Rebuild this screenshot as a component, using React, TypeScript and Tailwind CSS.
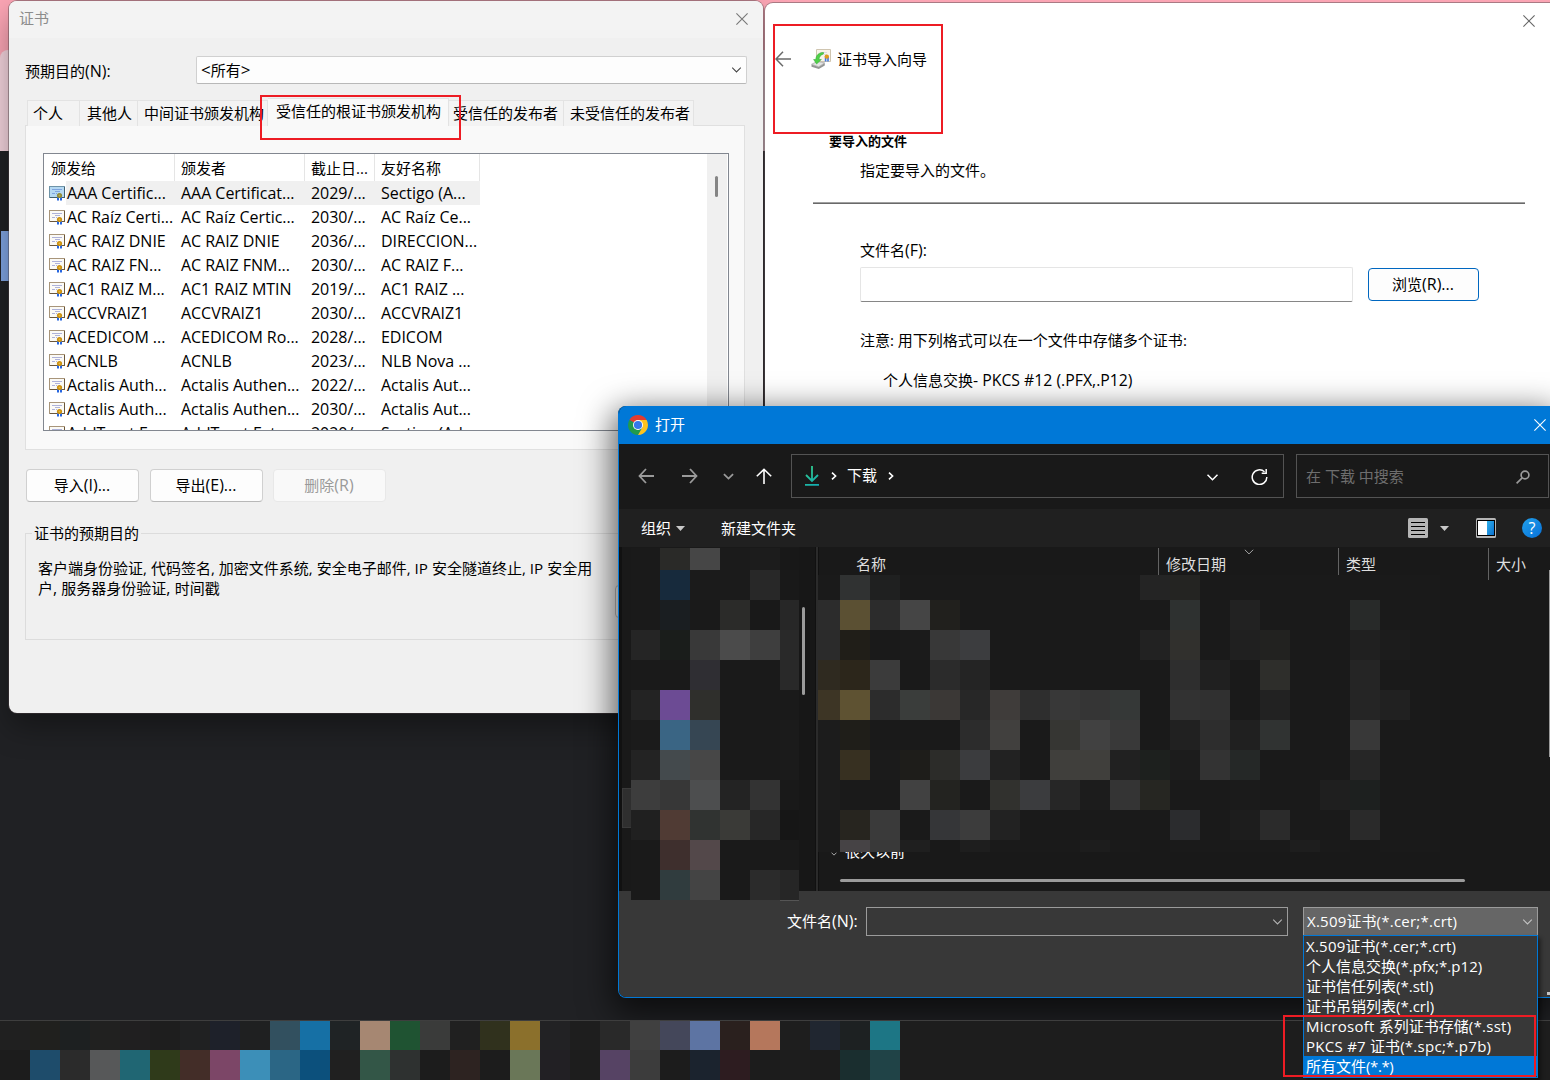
import React from "react";

const FONT = "font-['Open_Sans','Noto_Sans_CJK_SC',sans-serif]";

/* Mixed Chinese/Latin text: Latin runs are set slightly larger than the ideographs. */
function T({ children, latin = "text-[16px] leading-[0]" }: { children: string; latin?: string }) {
  return (
    <span className="whitespace-pre">
      {children.split(/([\u3000-\u9fff]+)/).map((part, i) =>
        i % 2 === 1 ? part : part && <span key={i} className={latin}>{part}</span>,
      )}
    </span>
  );
}

type MosaicProps = { cols: number[]; rows: number[]; cells: string[]; base: string };

/* Pixelated block: each cell is a hex colour, "." keeps the base colour. */
function Mosaic({ cols, rows, cells, base }: MosaicProps) {
  return (
    <div className="flex flex-col" style={{ backgroundColor: base }}>
      {cells.map((line, r) => (
        <div key={r} className="flex" style={{ height: rows[r] }}>
          {line.split(" ").map((c, i) => (
            <div
              key={i}
              className="shrink-0"
              style={{ width: cols[i], backgroundColor: c === "." ? base : "#" + c }}
            />
          ))}
        </div>
      ))}
    </div>
  );
}

const SIDE_CELLS = [
  ". 2a2a28 464646 1b1b1b 1c1c1c 181818",
  ". 172a3c 1b1b1b 1b1b1b 282828 191919",
  ". 1a1e21 . 2b2b29 191919 272727",
  "252525 1a1d1b 393939 4b4b4b 3e3e3e 292929",
  ". . 2f2e33 . . 292929",
  "232323 6c4b94 2f2f2c . . .",
  "1b1b1b 3a6584 364653 . . 1b1b1b",
  "232323 444a4d 474747 . . 1b1b1b",
  "3d3d3d 373737 4d4e4f 232323 333333 191919",
  "202020 503b34 303331 3a3a37 272727 161616",
  ". 3e2f2d 53484a . . .",
  ". 303c3e 444444 . 2b2b2b 262626",
];

const FILE_CELLS = [
  ". 303232 1f2020 . . . . . . . . 242424 242422 . . . . . . . .",
  "2c2c2c 5b5033 2c2c2c 454545 21201d . . . . . . . 2e3130 . 222222 . . . 282a29 . .",
  "2b2b2b 201e18 . 1b1b1b 383838 3c3d3f . . . . . 222222 31302d . 202020 222220 . . 202020 1c1c1c .",
  "2f2a20 2c261b 3b3b3b . 2b2b2b 242424 . . . . . . 2e2e2e 202020 . 2e2e2b . . 252525 . .",
  "3d3525 5e5232 2c2c2c 3a3d3b 3b3836 272727 3f3c3a 2e2e2e 383838 353535 353837 . 323232 303030 . 222222 . . 252525 212121 .",
  "1c1c1c 1f1e19 . . . 2c2c2c 41403e . 363633 414141 393939 . 212121 2d2d2d 202020 303332 . . 383838 . .",
  "1c1c1c 373021 1b1b1b 1e1d1a 2c2c29 3b3c3e 222222 . 403f3c 403f3c 212121 1d201e 1c1c1c 333333 252827 . . . 262626 . .",
  "1c1c1c . . 414141 232320 . 31312e 3b3c3e 262626 1c1c1c 343434 262622 . . 1b1b1b . . 1f1f1f 1d201f . .",
  "1b1b1b 27251f 3a3a3a . 353638 3c3c3c 222222 . . . . . 2b2c2e . 1d1d1d 2b2b2b . . 2a2a2a . .",
  "1b1b1b 464345 393939 1f1f1f 191919 1e1e1e . . . 1d1d1d . 191919 . . . . 1e1e1e . 191919 . .",
];

const TASK_CELLS = [
  "202020 20201e 1d2021 212120 201f20 1e1e1e 202122 1e212a 1f2021 32505f 1670a5 1f2325 a68772 1f5332 3a3b3a 202020 30311d 8b702c 222224 1e1e1e 292929 404040 44475a 5d74a3 2a201e b5775c 1e1e1e 202630 1d2122 1d7685",
  "1c1c1c 1e4c6b 2b2b2b 575859 206673 2f3a1a 432d28 7c4667 3c8fb8 2b6685 0c507c 202020 335647 2e3130 1c1c1c 2d2321 1c1c1c 6a7758 222024 1d1d1d 564364 3c3c3c 1c1c1c 1b232e 2d1c20 1c1c1c 1d1d1d 1c1c1c 1a2e2f 204347",
];

const CERTS = [
  ["AAA Certific...", "AAA Certificat...", "2029/...", "Sectigo (A..."],
  ["AC Raíz Certi...", "AC Raíz Certic...", "2030/...", "AC Raíz Ce..."],
  ["AC RAIZ DNIE", "AC RAIZ DNIE", "2036/...", "DIRECCION..."],
  ["AC RAIZ FN...", "AC RAIZ FNM...", "2030/...", "AC RAIZ F..."],
  ["AC1 RAIZ M...", "AC1 RAIZ MTIN", "2019/...", "AC1 RAIZ ..."],
  ["ACCVRAIZ1", "ACCVRAIZ1", "2030/...", "ACCVRAIZ1"],
  ["ACEDICOM ...", "ACEDICOM Ro...", "2028/...", "EDICOM"],
  ["ACNLB", "ACNLB", "2023/...", "NLB Nova ..."],
  ["Actalis Auth...", "Actalis Authen...", "2022/...", "Actalis Aut..."],
  ["Actalis Auth...", "Actalis Authen...", "2030/...", "Actalis Aut..."],
  ["AddTrust Ex...", "AddTrust Exter...", "2020/...", "Sectigo (Ad..."],
];

const WIDE = "tracking-[0.24px]";
const FILTERS: [string, string][] = [
  ["X.509证书(*.cer;*.crt)", WIDE],
  ["个人信息交换(*.pfx;*.p12)", "tracking-[0.05px]"],
  ["证书信任列表(*.stl)", "tracking-normal"],
  ["证书吊销列表(*.crl)", "tracking-normal"],
  ["Microsoft 系列证书存储(*.sst)", "tracking-[0.27px]"],
  ["PKCS #7 证书(*.spc;*.p7b)", "tracking-[0.27px]"],
  ["所有文件(*.*)", "tracking-[-0.4px]"],
];

function CloseIcon({ className }: { className: string }) {
  return (
    <svg className={"size-3 " + className} viewBox="0 0 12 12" fill="none" stroke="currentColor" strokeWidth="1.1">
      <path d="M.4.4l11.2 11.2M11.6.4L.4 11.6" />
    </svg>
  );
}

function Chevron({ className, w = 1.2 }: { className: string; w?: number }) {
  return (
    <svg className={className} viewBox="0 0 12 7" fill="none" stroke="currentColor" strokeWidth={w}>
      <path d="M1 .8l5 5 5-5" />
    </svg>
  );
}

function CertIcon({ selected }: { selected: boolean }) {
  return (
    <svg className="h-[15px] w-4 shrink-0" viewBox="0 0 16 15">
      <path d="M0 0h16v12H0z" fill={selected ? "#6f94a8" : "#a8957a"} />
      <path d="M15 1h1v11H1v-1h14z" fill={selected ? "#41606f" : "#6b5638"} />
      <path d="M1 1h14v10H1z" fill={selected ? "#b5d9f3" : "#fbfaf6"} />
      <path d="M3 3.500h10M6 5.500h5M3 7.500h3M7 7.500h1" stroke={selected ? "#7fa5e0" : "#aeb2da"} />
      <path d="M8 11h2v3.500H8zM11 11h2v3.500h-2z" fill="#2766e0" />
      <circle cx="10.500" cy="9.500" r="2.600" fill={selected ? "#8f8a36" : "#c98f10"} />
      <circle cx="10.500" cy="9.500" r="1" fill={selected ? "#b5aa55" : "#e8b93c"} />
    </svg>
  );
}

function WizardIcon() {
  return (
    <svg className="h-5 w-5" viewBox="0 0 20 20">
      <path d="M5.500.5h14v12h-14z" fill="#f8f4ea" stroke="#cfc5b0" />
      <path d="M9 3.500h7M13 5.500h3" stroke="#dcdce4" />
      <path d="M14.600 8v4.500M17 8v4.500" stroke="#3f78e0" strokeWidth="1.600" />
      <circle cx="15.800" cy="7.600" r="2.200" fill="#e09a1c" />
      <path d="M.6 15.300l5.400-2.800 7.600 1.300-5.800 4z" fill="#e4e4e4" stroke="#a5a5a5" strokeWidth=".7" />
      <path d="M.5 15.500l7.300 2.500v2L.5 17.800zM7.800 18l6-4v2.400l-6 3.600z" fill="#949694" />
      <path d="M12.500 3.500C8 3.500 5 6 4.800 10.500H2.600L5.600 15l4.800-4.500H8C8.200 8 9.500 6 12.500 5z" fill="#4fd048" stroke="#35a535" strokeWidth=".5" />
    </svg>
  );
}

function ChromeIcon() {
  return (
    <svg className="size-5" viewBox="0 0 20 20">
      <path d="M10 10L1.340 5A10 10 0 0 1 18.660 5z" fill="#e33b2e" />
      <path d="M10 10L1.340 5A10 10 0 0 0 10 20l4.300-7.500z" fill="#219a4b" />
      <path d="M10 5h8.660A10 10 0 0 1 10 20l4.330-7.500z" fill="#fcc31e" />
      <circle cx="10" cy="10" r="5" fill="#fff" />
      <circle cx="10" cy="10" r="4.100" fill="#3578ec" />
    </svg>
  );
}

const TAB = "h-[26px] shrink-0 whitespace-nowrap border-t border-r border-[#e3e3e3] bg-[#f3f3f3] leading-[24px]";
const BUTTON = "flex h-[33px] w-[113px] items-center justify-center rounded border pr-px";

function CertificateWindow() {
  return (
    <section className="absolute left-[9px] top-px h-[712px] w-[754px] overflow-hidden rounded-lg bg-[#f0f0f0] text-black shadow-[0_0_0_1px_rgba(70,60,64,0.45),0_14px_30px_rgba(0,0,0,0.35)]">
      <header className="flex h-[37px] items-center justify-between bg-[#f3f3f3] pb-[2px] pl-[10px] pr-[15px] text-[#8c8c8c]">
        <span>证书</span>
        <CloseIcon className="text-[#777]" />
      </header>

      <div className="flex h-7 items-center pl-4 mt-[18px]">
        <span className="w-[171px] pt-[2px]"><T>预期目的(N):</T></span>
        <div className="flex h-7 w-[551px] items-center justify-between rounded-xs border border-[#d0d0d0] border-b-[#b8b8b8] bg-[#fdfdfd] pl-1 pr-[4px]">
          <T latin="text-[17px] leading-[0]">{"<所有>"}</T>
          <Chevron className="h-[6px] w-[11px] text-[#444]" />
        </div>
      </div>

      <div className="mt-3.5 flex h-7 items-end pl-[18px]">
        <div className={TAB + " w-[53px] border-l pl-[5px]"}>个人</div>
        <div className={TAB + " w-[58px] pl-[7px]"}>其他人</div>
        <div className={TAB + " w-[130px] pl-[6px]"}>中间证书颁发机构</div>
        <div className="h-7 w-[181px] whitespace-nowrap border-t border-r border-[#e3e3e3] bg-[#f9f9f9] pl-2 leading-[24px]">受信任的根证书颁发机构</div>
        <div className={TAB + " w-[115px] pl-1"}>受信任的发布者</div>
        <div className={TAB + " w-[130px] pl-[6px]"}>未受信任的发布者</div>
      </div>

      <div className="-mt-px ml-4 h-[325px] w-[720px] border border-[#e0e0e0] bg-[#f9f9f9] pl-[17px] pt-[27px]">
        <div className="flex h-[278px] w-[686px] overflow-hidden border border-[#828790] bg-white">
          <div className="min-w-0 flex-1">
            <div className="flex h-[27px] leading-[28px]">
              <span className="w-[131px] border-r border-[#e5e5e5] pl-[7px]">颁发给</span>
              <span className="w-[130px] border-r border-[#e5e5e5] pl-[6px]">颁发者</span>
              <span className="w-[70px] border-r border-[#e5e5e5] pl-[6px]">截止日...</span>
              <span className="w-[105px] border-r border-[#e5e5e5] pl-[6px]">友好名称</span>
            </div>
            {CERTS.map((row, i) => (
              <div key={i} className={"flex h-6 w-[436px] whitespace-nowrap text-[16px] leading-[25px] tracking-[-0.04px] " + (i === 0 ? "bg-[linear-gradient(to_right,#fff_22px,#f0f0f0_22px)]" : "")}>
                <span className="flex w-[137px] items-start gap-[2px] pl-[5px]">
                  <span className="pt-[5px]"><CertIcon selected={i === 0} /></span>
                  {row[0]}
                </span>
                <span className="w-[130px]">{row[1]}</span>
                <span className="w-[70px]">{row[2]}</span>
                <span>{row[3]}</span>
              </div>
            ))}
          </div>
          <div className="flex w-[21px] justify-center border-r border-white bg-[#f0f0f0] pt-[22px]">
            <div className="-ml-0.5 h-[21px] w-[3px] rounded-full bg-[#858585]" />
          </div>
        </div>
      </div>

      <div className="mt-[19px] flex pl-[17px]">
        <div className={BUTTON + " mr-[11px] border-[#d0d0d0] border-b-[#b8b8b8] bg-[#fdfdfd]"}><T>导入(I)...</T></div>
        <div className={BUTTON + " mr-[10px] border-[#d0d0d0] border-b-[#b8b8b8] bg-[#fdfdfd]"}><T>导出(E)...</T></div>
        <div className={BUTTON + " border-[#e8e8e8] bg-[#f9f9f9] text-[#9a9a9a]"}><T>删除(R)</T></div>
      </div>

      <div className="relative ml-4 mt-[31px] h-[107px] w-[720px] border border-[#dcdcdc] pl-3 pt-6 leading-5">
        <span className="absolute -top-[11px] left-[6px] bg-[#f0f0f0] px-[2px] leading-5">证书的预期目的</span>
        <p className="h-5">
          <T latin="text-[15.2px] leading-[0]">客户端身份验证, 代码签名, 加密文件系统, 安全电子邮件, IP 安全隧道终止, IP 安全用</T>
        </p>
        <p className="h-5">
          <T>户, 服务器身份验证, 时间戳</T>
        </p>
        <div className="absolute left-[589px] top-[51px] h-[33px] w-[113px] rounded border border-[#bbb] bg-[#fdfdfd]" />
      </div>
    </section>
  );
}

function ImportWizard() {
  return (
    <section className="absolute left-[765px] top-[3px] h-[700px] w-[785px] rounded-tl-lg bg-white text-black shadow-[0_0_0_1px_rgba(90,80,84,0.5)]">
      <div className="flex h-[34px] items-center justify-end pr-[15px] pt-[2px]">
        <CloseIcon className="text-[#666]" />
      </div>
      <div className="flex h-11 items-center pl-[10px]">
        <svg className="h-4 w-4" viewBox="0 0 16 16" fill="none" stroke="#6a6a6a" strokeWidth="1.500">
          <path d="M16 8H1M8 .8L1 8l7 7.200" />
        </svg>
        <div className="ml-5 mr-[6px]"><WizardIcon /></div>
        <span>证书导入向导</span>
      </div>
      <h2 className="ml-16 mt-[50px] text-[13px] font-bold leading-5">要导入的文件</h2>
      <p className="ml-[95px] mt-[9px] leading-5">指定要导入的文件。</p>
      <div className="ml-12 mt-[22px] h-[2px] w-[712px] border-b border-[#696969] bg-[#a0a0a0]" />
      <p className="ml-[95px] mt-[36px] h-5 leading-5"><T>文件名(F):</T></p>
      <div className="ml-[95px] mt-[7px] flex items-center">
        <div className="h-[35px] w-[493px] rounded-xs border border-[#e5e5e5] border-b-[#868686] bg-white" />
        <div className="ml-[15px] flex h-[33px] w-[111px] items-center justify-center rounded border border-[#0067c0] bg-[#fdfdfd] pr-px"><T>浏览(R)...</T></div>
      </div>
      <p className="ml-[95px] mt-[28px] h-5 leading-5"><T latin="text-[15px] leading-[0]">注意: 用下列格式可以在一个文件中存储多个证书:</T></p>
      <p className="ml-[118px] mt-5 h-5 leading-5"><T latin="text-[15.8px] leading-[0]">个人信息交换- PKCS #12 (.PFX,.P12)</T></p>
    </section>
  );
}

function NavBar() {
  return (
    <div className="flex h-[65px] items-center border-b border-transparent pl-[19px] text-white">
      <svg className="h-4 w-4 text-[#9a9a9a]" viewBox="0 0 16 16" fill="none" stroke="currentColor" strokeWidth="1.800">
        <path d="M16 8H1.500M8 1L1.500 8 8 15" />
      </svg>
      <svg className="ml-7 h-4 w-4 text-[#9a9a9a]" viewBox="0 0 16 16" fill="none" stroke="currentColor" strokeWidth="1.800">
        <path d="M0 8h14.500M8 1l6.500 7L8 15" />
      </svg>
      <Chevron className="ml-[25px] h-[7px] w-[11px] text-[#9a9a9a]" w={1.900} />
      <svg className="ml-[22px] mr-px h-4 w-4" viewBox="0 0 16 16" fill="none" stroke="currentColor" strokeWidth="1.600">
        <path d="M8 16V1.300M.8 8.300L8 1.300l7.200 7" />
      </svg>
      <div className="ml-[18px] flex h-11 w-[493px] items-center border border-[#535353] pl-[13px]">
        <svg className="h-5 w-3.5" viewBox="0 0 14 20" fill="none" strokeWidth="1.800">
          <defs>
            <linearGradient id="dl" x1="0" y1="0" x2="14" y2="20" gradientUnits="userSpaceOnUse">
              <stop stopColor="#35d08a" />
              <stop offset="1" stopColor="#10a9b4" />
            </linearGradient>
          </defs>
          <path d="M7 0v15M1 9l6 6 6-6M0 18.800h14" stroke="url(#dl)" />
        </svg>
        <svg className="ml-3 h-2 w-[6px]" viewBox="0 0 6 8" fill="none" stroke="currentColor" strokeWidth="1.600"><path d="M1 .6L4.600 4 1 7.400" /></svg>
        <span className="ml-[10px] pb-[2px]">下载</span>
        <svg className="ml-[11px] h-2 w-[6px]" viewBox="0 0 6 8" fill="none" stroke="currentColor" strokeWidth="1.600"><path d="M1 .6L4.600 4 1 7.400" /></svg>
        <Chevron className="ml-auto mr-8 mt-0.5 h-[7px] w-[13px]" w={1.500} />
        <svg className="mr-[15px] mt-0.5 h-4 w-[17px]" viewBox="0 0 17 16" fill="none" stroke="currentColor" strokeWidth="1.500">
          <path d="M15.800 8A7.300 7.300 0 1 1 13.500 2.800M15.200 0v4.300h-4.500" />
        </svg>
      </div>
      <div className="ml-3 flex h-11 w-[253px] items-center justify-between border border-[#535353] pl-[9px] pr-[18px]">
        <span className="text-[#6e6e6e]">在 下载 中搜索</span>
        <svg className="mt-px h-3.5 w-3.5 text-[#9a9a9a]" viewBox="0 0 14 14" fill="none" stroke="currentColor" strokeWidth="1.700">
          <circle cx="9" cy="5" r="3.900" />
          <path d="M6.200 7.800L.6 13.400" />
        </svg>
      </div>
    </div>
  );
}

function Toolbar() {
  return (
    <div className="flex h-[38px] items-center bg-[#202020] pl-[22px] text-white">
      <span>组织</span>
      <svg className="ml-[5px] h-[5px] w-[9px]" viewBox="0 0 9 5"><path d="M0 0h9L4.500 5z" fill="#c8c8c8" /></svg>
      <span className="ml-9">新建文件夹</span>
      <svg className="ml-auto size-5" viewBox="0 0 20 20">
        <rect width="20" height="20" rx="1.500" fill="#b5b5b5" />
        <path d="M3 4.500h14M3 8.500h14M3 12.500h14M3 16.500h14" stroke="#000" />
      </svg>
      <svg className="ml-3 h-[5px] w-[9px]" viewBox="0 0 9 5"><path d="M0 0h9L4.500 5z" fill="#c8c8c8" /></svg>
      <svg className="ml-[27px] size-5" viewBox="0 0 20 20">
        <defs>
          <linearGradient id="pane" x1="0" y1="0" x2="1" y2="1">
            <stop stopColor="#2fb0ea" />
            <stop offset="1" stopColor="#0a70d0" />
          </linearGradient>
        </defs>
        <rect width="20" height="20" rx="1.500" fill="#b5b5b5" />
        <path d="M1 2h18v16H1z" fill="#000" />
        <path d="M2 3h9v14H2z" fill="#fff" />
        <path d="M11 3h7v14h-7z" fill="url(#pane)" />
      </svg>
      <div className="ml-[26px] mr-2 flex size-5 items-center justify-center rounded-full bg-linear-to-br from-[#22a0ea] to-[#0a70d8] text-[16px] leading-none">?</div>
    </div>
  );
}

function FileBrowser() {
  return (
    <div className="flex h-[344px] bg-[#191919]">
      <div className="flex w-3 shrink-0 flex-col border-l-[3px] border-[#111]">
        <div className="mt-[241px] h-10 border border-r-0 border-[#3a3a3a] bg-[#2f2f2f]" />
      </div>
      <div className="z-10 mt-px h-[353px] w-[168px] shrink-0">
        <Mosaic cols={[29, 30, 30, 30, 30, 19]} rows={[22, 30, 30, 30, 30, 30, 30, 30, 30, 30, 30, 30]} cells={SIDE_CELLS} base="#1a1a1a" />
        <div className="ml-[149px] h-px bg-[#555]" />
      </div>
      <div className="w-4 shrink-0 bg-[#171717] pl-[3px] pt-[60px]">
        <div className="h-[88px] w-[3px] rounded-full bg-[#9b9b9b]" />
      </div>
      <div className="w-1 shrink-0 border-x border-[#111] bg-[#2b2b2b]" />
      <div className="relative flex min-w-0 flex-1 flex-col text-[#dedede]">
        <div className="relative mt-px flex h-[27px] pl-[37px] leading-[32px]">
          <span className="w-[302px] shrink-0">名称</span>
          <span className="w-[180px] shrink-0 border-l border-[#636363] pl-[7px]">修改日期</span>
          <span className="w-[150px] shrink-0 border-l border-[#636363] pl-[7px]">类型</span>
          <span className="h-8 w-[61px] shrink-0 border-l border-[#636363] pl-[7px]">大小</span>
          <Chevron className="absolute left-[425px] top-px h-[6px] w-[10px] text-[#a5a5a5]" />
        </div>
        <div className="-ml-px w-[622px]">
          <Mosaic
            cols={[22, 30, 30, 30, 30, 30, 30, 30, 30, 30, 30, 30, 30, 30, 30, 30, 30, 30, 30, 30, 30]}
            rows={[25, 30, 30, 30, 30, 30, 30, 30, 30, 12]}
            cells={FILE_CELLS}
            base="#1a1a1a"
          />
        </div>
        <div className="flex h-4 overflow-hidden pl-3 text-white">
          <Chevron className="mr-2 h-1 w-[6px] text-[#aaa]" w={2} />
          <span className="-mt-3 h-[22px] leading-[22px]">很久以前</span>
        </div>
        <div className="ml-[21px] mt-[11px] h-[3px] w-[625px] rounded-full bg-[#9b9b9b]" />
        <div className="absolute right-0 top-[23px] h-[187px] w-px bg-[#9b9b9b]" />
      </div>
    </div>
  );
}

function OpenDialog() {
  return (
    <section className="absolute left-[618px] top-[406px] h-[592px] w-[932px] rounded-l-lg bg-[#191919] shadow-[0_10px_32px_6px_rgba(0,0,0,0.6)]">
      <div className="flex h-full flex-col overflow-hidden rounded-l-lg border-b border-l border-[#0078d7]">
        <header className="flex h-[38px] shrink-0 items-center bg-[#0078d7] pl-[9px] pr-1 text-white">
          <ChromeIcon />
          <span className="ml-[7px] pb-[2px]">打开</span>
          <CloseIcon className="ml-auto" />
        </header>
        <NavBar />
        <Toolbar />
        <FileBrowser />
        <footer className="relative flex flex-1 bg-[#383838] pl-[168px] pt-4 text-white">
          <span className="w-[79px] leading-[28px]"><T>文件名(N):</T></span>
          <div className="flex h-[29px] w-[422px] items-center justify-end border border-[#9b9b9b] pr-[4px]">
            <Chevron className="h-[6px] w-[11px] text-[#b5b5b5]" />
          </div>
          <div className="ml-[15px] flex h-[29px] w-[235px] items-center justify-between border border-[#9b9b9b] bg-[#666] pl-[3px] pr-[4px]">
            <T latin={WIDE}>{FILTERS[0][0]}</T>
            <Chevron className="h-[6px] w-[11px] text-[#c5c5c5]" />
          </div>
          <div className="absolute bottom-[2px] right-0 h-[3px] w-[3px] bg-[#c5c5c5]" />
        </footer>
      </div>
    </section>
  );
}

export default function App() {
  return (
    <main className={"relative h-[1080px] w-[1550px] overflow-hidden bg-[#202124] text-[15px] " + FONT}>
      <div className="h-[151px] bg-[#fba5b4] pt-[50px]">
        <div className="h-[101px] rounded-tl-lg bg-[#f3d3dc]" />
      </div>
      <div className="ml-px mt-20 h-[50px] w-2 bg-[#7fa4e2]" />

      <CertificateWindow />
      <ImportWizard />
      <OpenDialog />

      <div className="absolute bottom-0 left-0 h-[60px] w-full border-t border-[#3e3e3e] bg-[#1d1d1d]">
        <Mosaic cols={Array(30).fill(30)} rows={[29, 30]} cells={TASK_CELLS} base="#1d1d1d" />
      </div>

      <ul className="absolute left-[1303px] top-[935px] w-[235px] border border-[#0078d7] bg-[#383838] pb-px text-white shadow-[3px_3px_4px_rgba(0,0,0,0.4)]">
        {FILTERS.map(([name, tracking], i) => (
          <li key={name} className={"h-5 pl-[2px] leading-5 " + (i === 6 ? "bg-[#0078d7]" : "")}>
            <T latin={tracking}>{name}</T>
          </li>
        ))}
      </ul>

      <div className="absolute left-[260px] top-[95px] h-[45px] w-[201px] border-2 border-[#ed1c24]" />
      <div className="absolute left-[773px] top-[24px] h-[110px] w-[170px] border-2 border-[#ed1c24]" />
      <div className="absolute left-[1283px] top-[1015px] h-[62px] w-[253px] border-2 border-[#ed1c24]" />
    </main>
  );
}
